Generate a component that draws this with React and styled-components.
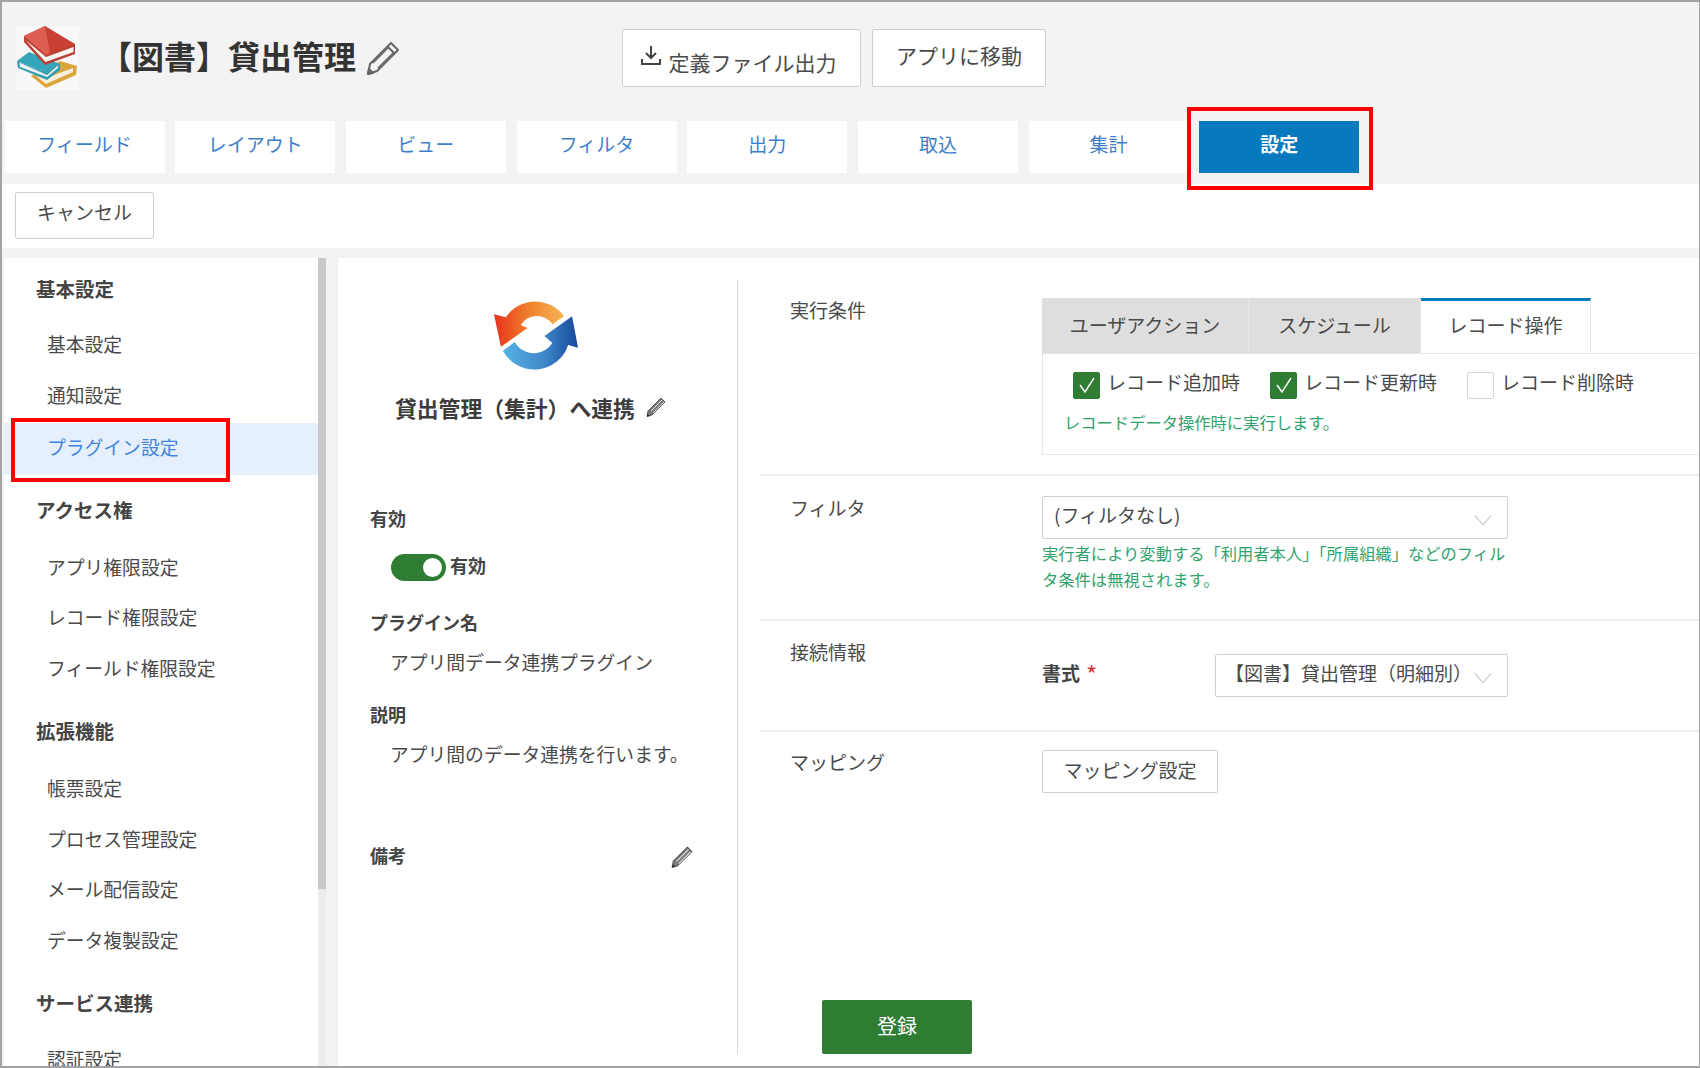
import React from "react";
import styled, { createGlobalStyle } from "styled-components";

const Global = createGlobalStyle`
  html, body { margin: 0; padding: 0; background: #fff; }
  body { font-family: "Noto Sans CJK JP", "Noto Sans", sans-serif; color: #4a4a4a; }
  * { box-sizing: border-box; }
`;

const Frame = styled.div`
  width: 1700px; height: 1068px; display: flex; flex-direction: column; overflow: hidden;
  border-style: solid; border-color: #a3a3a3; border-width: 2px 1px 2px 2px; background: #f3f3f3;
`;
const Header = styled.header`background: #f3f3f3; height: 182px; display: flex; flex-direction: column;`;
const TitleRow = styled.div`height: 119px; padding: 24px 0 0 14px; display: flex; align-items: flex-start;`;
const AppIcon = styled.svg`width: 63px; height: 64px; flex: none; background: #f8f8f8;`;
const AppTitle = styled.h1`
  margin: 7px 0 0 21px; font-size: 32px; line-height: 44px; font-weight: 700; color: #333; white-space: nowrap;
`;
const TitlePencil = styled.svg`width: 36px; height: 36px; margin: 14px 0 0 9px; flex: none;`;
const HeaderButtons = styled.div`display: flex; gap: 11px; margin: 3px 0 0 221px;`;
const HeaderButton = styled.button`
  height: 58px; width: ${p => p.$w}px; background: #fff; border: 1px solid #cfcfcf; border-radius: 2px;
  font: 400 21px "Noto Sans CJK JP", sans-serif; color: #4a4a4a; padding: 0 ${p => p.$pr || 0}px 0 0;
  display: flex; align-items: center; justify-content: center; gap: 6px; white-space: nowrap;
`;
const DownloadIcon = styled.svg`width: 24px; height: 24px; margin-bottom: 6px; flex: none;`;
const ButtonTextLow = styled.span`padding-top: 8px;`;
const ButtonTextHigh = styled.span`padding-bottom: 7px;`;

const TabRow = styled.nav`display: flex; gap: 10.7px; padding-left: 2.5px; height: 52px;`;
const Tab = styled.div`
  position: relative; width: 160px; height: 52px; display: flex; align-items: center; justify-content: center;
  font-size: 19px; padding-bottom: 7px;
  background: ${p => (p.$active ? "#0679bf" : "#fff")};
  color: ${p => (p.$active ? "#fff" : "#3f7fca")};
  font-weight: ${p => (p.$active ? 700 : 400)};
`;
const TabMark = styled.span`
  position: absolute; left: -12px; right: -14px; top: -14px; bottom: -17px; border: 4px solid #f00;
`;

const Toolbar = styled.div`background: #fff; height: 64px; padding: 8px 13px; flex: none;`;
const Button = styled.button`
  height: ${p => p.$h || 47}px; width: ${p => p.$w}px; background: #fff; border: 1px solid #cfcfcf; border-radius: 2px;
  font: 400 19px "Noto Sans CJK JP", sans-serif; color: #4a4a4a; padding: 0 0 ${p => p.$pb || 4}px;
`;

const Body = styled.div`flex: 1; min-height: 0; display: flex; padding: 10px 0 0 2px; background: #f3f3f3;`;
const Sidebar = styled.aside`
  position: relative; width: 322px; flex: none; background: #fff; padding: 11px 8px 0 0; overflow: hidden;
  &::before { content: ""; position: absolute; top: 0; right: 0; bottom: 0; width: 8px; background: #ececec; }
  &::after { content: ""; position: absolute; top: 0; right: 0; height: 631px; width: 8px; background: #c9c9c9; }
`;
const NavHead = styled.div`
  height: 40px; line-height: 40px; padding-left: 32px; font-size: 19.5px; font-weight: 700; color: #444; white-space: nowrap;
  margin: ${p => p.$mt}px 0 ${p => p.$mb}px;
`;
const NavItem = styled.div`
  position: relative; height: ${p => (p.$active ? "52px" : "50.5px")}; line-height: 48px; padding-left: 43px; font-size: 18.8px; white-space: nowrap;
  margin: ${p => (p.$active ? "2px 0 -3.5px" : "0")};
  background: ${p => (p.$active ? "#e6effc" : "transparent")};
  color: ${p => (p.$active ? "#3f86dc" : "#4a4a4a")};
`;
const NavMark = styled.span`
  position: absolute; left: 7px; top: -5px; width: 219px; height: 64px; border: 4px solid #f00;
`;

const Main = styled.main`flex: 1; min-width: 0; margin-left: 12px; background: #fff; display: flex;`;
const InfoColumn = styled.section`
  width: 400px; height: 774px; margin-top: 22px; flex: none; border-right: 1px solid #d8d8d8; padding: 18px 0 0 32px;
`;
const Logo = styled.svg`display: block; width: 86px; height: 74px; margin-left: 123px;`;
const PluginTitle = styled.div`
  display: flex; align-items: center; margin: 16px 0 0 25px; height: 38px; font-size: 21.8px; font-weight: 700; color: #3c3c3c; white-space: nowrap;
`;
const SmallPencil = styled.svg`width: ${p => p.$s || 22}px; height: ${p => p.$s || 22}px; flex: none; margin: ${p => p.$mt || 0}px 0 0 ${p => p.$ml || 0}px;`;
const FieldHead = styled.div`
  display: flex; justify-content: space-between; align-items: center; width: 324px;
  font-size: 18px; font-weight: 700; color: #444; line-height: 28px; margin-top: ${p => p.$mt}px;
`;
const FieldValue = styled.div`font-size: 18.8px; line-height: 30px; padding-left: 20px; margin-top: ${p => p.$mt}px; white-space: nowrap;`;
const SwitchRow = styled.div`display: flex; align-items: center; gap: 4px; padding-left: 21px; margin-top: 22px; font-size: 18px; font-weight: 700; color: #444; height: 27px;`;
const SwitchText = styled.span`margin-bottom: 6px;`;
const Switch = styled.span`
  position: relative; width: 55px; height: 27px; border-radius: 14px; background: #2e7d32; flex: none;
  &::after { content: ""; position: absolute; right: 4px; top: 4px; width: 19px; height: 19px; border-radius: 50%; background: #fff; }
`;

const FormColumn = styled.section`flex: 1; min-width: 0; margin-left: 22px; display: flex; flex-direction: column;`;
const FormRow = styled.div`
  display: flex; height: ${p => p.$h}px; padding: ${p => p.$pt}px 0 0 30px; border-bottom: ${p => (p.$last ? "none" : "2px solid #eeeeee")}; flex: none;
`;
const RowLabel = styled.div`width: 252px; flex: none; font-size: 19px; line-height: 28px; margin-top: ${p => p.$mt}px; color: #4a4a4a;`;
const RowBody = styled.div`flex: 1; min-width: 0;`;
const ModeTabs = styled.div`display: flex; height: 55px;`;
const ModeTab = styled.div`
  height: 55px; width: ${p => p.$w}px; display: flex; align-items: center; justify-content: center; font-size: 19px; padding-bottom: 5px;
  background: ${p => (p.$active ? "#fff" : "#dedede")};
  border-top: 3px solid ${p => (p.$active ? "#0679bf" : "#dedede")};
  border-right: 1px solid #e4e7ec;
`;
const ModePanel = styled.div`height: 102px; border: 1px solid #e4e7ec; border-right: none; padding: 16px 0 0 30px;`;
const CheckRow = styled.div`display: flex; height: 30px;`;
const CheckLabel = styled.label`display: flex; align-items: center; width: ${p => p.$w}px; font-size: 19px;`;
const CheckText = styled.span`margin-bottom: 7px;`;
const Check = styled.span`
  width: 27px; height: 27px; margin: 0 7px 0 0; flex: none; border-radius: 2px; display: flex; align-items: center; justify-content: center;
  background: ${p => (p.$on ? "#2e7d32" : "#fff")};
  border: 1px solid ${p => (p.$on ? "#2e7d32" : "#d5d5d5")};
`;
const CheckMark = styled.svg`width: 20px; height: 20px;`;
const Hint = styled.div`font-size: 16.3px; line-height: 26px; color: #2fa36c; margin: ${p => p.$mt}px 0 0 ${p => p.$ml || 0}px; width: ${p => p.$w || "auto"};`;
const Select = styled.div`
  width: ${p => p.$w}px; height: ${p => p.$h}px; background: #fff; border: 1px solid #cfcfcf; border-radius: 2px; flex: none;
  display: flex; align-items: center; justify-content: space-between; padding: 0 14px 0 ${p => p.$pl}px; font-size: ${p => p.$fs}px; white-space: nowrap;
`;
const SelectText = styled.span`margin-bottom: 6px;`;
const Chevron = styled.svg`width: 20px; height: 12px; flex: none; margin-top: 4px;`;
const FormatRow = styled.div`display: flex; align-items: center;`;
const FormatLabel = styled.div`width: 173px; font-size: 19px; font-weight: 700; color: #444; margin-bottom: 6px; display: flex; align-items: center;`;
const Required = styled.span`color: #d0323c; margin-left: 6px; font-weight: 400; font-size: 24px; line-height: 28px; margin-top: 2px;`;
const Footer = styled.div`margin-top: auto; padding: 0 0 12px 62px;`;
const SubmitButton = styled.button`
  width: 150px; height: 54px; border: none; border-radius: 2px; background: #2e7d32; color: #fff;
  font: 400 20px "Noto Sans CJK JP", sans-serif; padding: 0 0 4px;
`;

const BookIcon = () => (
  <AppIcon viewBox="0 0 63 64">
    <path d="M44 35 L61 40 L60 49 L30 62 L15 50Z" fill="#dba53c" />
    <path d="M19 49 L30 58 L57 46 L57 42 L30 52Z" fill="#f6efdf" />
    <path d="M1 35 L13 26 L44 38 L31 47Z" fill="#35a5ba" />
    <path d="M1 35 L2 42 L31 54 L44 44 L44 38 L31 47Z" fill="#2f9db2" />
    <path d="M3.5 36.5 L4 41 L31 51 L42 42 L42 39.5 L31 49Z" fill="#eef0f0" />
    <path d="M8 10 L8 16 L29 39 L59 28 L59 18Z" fill="#bd4036" />
    <path d="M9.5 14 L29.5 36 L57.5 26 L57.5 21 L30 31Z" fill="#f7f3f0" />
    <path d="M8 10 L29 0 L59 18 L30 29Z" fill="#c83f33" />
    <path d="M8 10 L29 0 L34 27 L30 29Z" fill="#dc5f52" />
  </AppIcon>
);

const HollowPencil = () => (
  <TitlePencil viewBox="0 0 36 36" fill="none" stroke="#666" strokeWidth="2" strokeLinejoin="round">
    <path d="M26 3 L33 10 L12 31 L3 34 L5 24Z" />
    <path d="M22.5 6.5 L29.5 13.5" />
    <path d="M8 23 L24 7 M13 28 L28 13" strokeWidth="1.4" />
    <path d="M3 34 L4 29 L8 33Z" fill="#444" />
  </TitlePencil>
);

const FilledPencil = ({ ml, mt, s }) => (
  <SmallPencil $ml={ml} $mt={mt} $s={s} viewBox="0 0 22 22">
    <path d="M16 2 L20 6 L7 19 L2 20.5 L3 15Z" fill="#7a7a7a" stroke="#555" strokeWidth="1" strokeLinejoin="round" />
    <path d="M6 15 L17 4 M8 17 L19 6" stroke="#e2e2e2" strokeWidth="1" />
    <path d="M2 20.5 L2.6 17.5 L5 20Z" fill="#333" />
  </SmallPencil>
);

const SyncLogo = () => (
  <Logo viewBox="0 0 87 72">
    <defs>
      <linearGradient id="syncOrange" x1="0" x2="1" y1="0.5" y2="0.5">
        <stop offset="0" stopColor="#e8301c" />
        <stop offset="0.5" stopColor="#f0822e" />
        <stop offset="1" stopColor="#f6b654" />
      </linearGradient>
      <linearGradient id="syncBlue" x1="0" x2="1" y1="0.5" y2="0.5">
        <stop offset="0" stopColor="#57b2e2" />
        <stop offset="0.55" stopColor="#3f88c8" />
        <stop offset="1" stopColor="#17479c" />
      </linearGradient>
    </defs>
    <path d="M72 17 A36 36 0 0 0 13 18 L1 15 L8 48 L35 29 L28 26 A19 19 0 0 1 60 25Z" fill="url(#syncOrange)" />
    <path d="M10 52 L22 43 A22 22 0 0 0 60 44 L52 37 L80 17 L86 49 L76 46 A36 36 0 0 1 10 52Z" fill="url(#syncBlue)" />
  </Logo>
);

const Tick = () => (
  <CheckMark viewBox="0 0 20 20" fill="none" stroke="#fff" strokeWidth="1.4">
    <path d="M3 10 L8 17 L17 3" />
  </CheckMark>
);

const Chev = () => (
  <Chevron viewBox="0 0 22 12" fill="none" stroke="#c9c9c9" strokeWidth="1.3">
    <path d="M2 1 L11 11 L20 1" />
  </Chevron>
);

const tabs = ["フィールド", "レイアウト", "ビュー", "フィルタ", "出力", "取込", "集計"];
const nav = [
  { head: "基本設定", mt: 0, mb: 11, items: ["基本設定", "通知設定", "プラグイン設定"] },
  { head: "アクセス権", mt: 18, mb: 13, items: ["アプリ権限設定", "レコード権限設定", "フィールド権限設定"] },
  { head: "拡張機能", mt: 17, mb: 13, items: ["帳票設定", "プロセス管理設定", "メール配信設定", "データ複製設定"] },
  { head: "サービス連携", mt: 17, mb: 12, items: ["認証設定"] },
];

export default function App() {
  return (
    <Frame>
      <Global />
      <Header>
        <TitleRow>
          <BookIcon />
          <AppTitle>【図書】貸出管理</AppTitle>
          <HollowPencil />
          <HeaderButtons>
            <HeaderButton $w={239} $pr={8}>
              <DownloadIcon viewBox="0 0 24 24" fill="none" stroke="#444" strokeWidth="2">
                <path d="M12 3 V15 M7 10 L12 15 L17 10 M3 16 V21 H21 V16" />
              </DownloadIcon>
              <ButtonTextLow>定義ファイル出力</ButtonTextLow>
            </HeaderButton>
            <HeaderButton $w={174}><ButtonTextHigh>アプリに移動</ButtonTextHigh></HeaderButton>
          </HeaderButtons>
        </TitleRow>
        <TabRow>
          {tabs.map(t => <Tab key={t}>{t}</Tab>)}
          <Tab $active>設定<TabMark /></Tab>
        </TabRow>
      </Header>
      <Toolbar><Button $w={139} $pb={8}>キャンセル</Button></Toolbar>
      <Body>
        <Sidebar>
          {nav.map(g => (
            <div key={g.head}>
              <NavHead $mt={g.mt} $mb={g.mb}>{g.head}</NavHead>
              {g.items.map(it => {
                const active = it === "プラグイン設定";
                return <NavItem key={it} $active={active}>{it}{active && <NavMark />}</NavItem>;
              })}
            </div>
          ))}
        </Sidebar>
        <Main>
          <InfoColumn>
            <SyncLogo />
            <PluginTitle>貸出管理（集計）へ連携<FilledPencil ml={10} /></PluginTitle>
            <FieldHead $mt={78}>有効</FieldHead>
            <SwitchRow><Switch /><SwitchText>有効</SwitchText></SwitchRow>
            <FieldHead $mt={27}>プラグイン名</FieldHead>
            <FieldValue $mt={11}>アプリ間データ連携プラグイン</FieldValue>
            <FieldHead $mt={23}>説明</FieldHead>
            <FieldValue $mt={11}>アプリ間のデータ連携を行います。</FieldValue>
            <FieldHead $mt={72}>備考<FilledPencil s={24} mt={4} /></FieldHead>
          </InfoColumn>
          <FormColumn>
            <FormRow $h={218} $pt={40}>
              <RowLabel $mt={-2}>実行条件</RowLabel>
              <RowBody>
                <ModeTabs>
                  <ModeTab $w={207}>ユーザアクション</ModeTab>
                  <ModeTab $w={172}>スケジュール</ModeTab>
                  <ModeTab $w={170} $active>レコード操作</ModeTab>
                </ModeTabs>
                <ModePanel>
                  <CheckRow>
                    <CheckLabel $w={197}><Check $on><Tick /></Check><CheckText>レコード追加時</CheckText></CheckLabel>
                    <CheckLabel $w={197}><Check $on><Tick /></Check><CheckText>レコード更新時</CheckText></CheckLabel>
                    <CheckLabel $w={180}><Check /><CheckText>レコード削除時</CheckText></CheckLabel>
                  </CheckRow>
                  <Hint $mt={9} $ml={-9}>レコードデータ操作時に実行します。</Hint>
                </ModePanel>
              </RowBody>
            </FormRow>
            <FormRow $h={145} $pt={20}>
              <RowLabel $mt={-2}>フィルタ</RowLabel>
              <RowBody>
                <Select $w={466} $h={43} $pl={11} $fs={19}><SelectText>(フィルタなし)</SelectText><Chev /></Select>
                <Hint $mt={1} $w="466px">実行者により変動する「利用者本人」「所属組織」などのフィルタ条件は無視されます。</Hint>
              </RowBody>
            </FormRow>
            <FormRow $h={111} $pt={33}>
              <RowLabel $mt={-16}>接続情報</RowLabel>
              <RowBody>
                <FormatRow>
                  <FormatLabel>書式<Required>*</Required></FormatLabel>
                  <Select $w={293} $h={43} $pl={9} $fs={19}><SelectText>【図書】貸出管理（明細別）</SelectText><Chev /></Select>
                </FormatRow>
              </RowBody>
            </FormRow>
            <FormRow $h={100} $pt={18} $last>
              <RowLabel $mt={-2}>マッピング</RowLabel>
              <RowBody><Button $w={176} $h={43} $pb={5}>マッピング設定</Button></RowBody>
            </FormRow>
            <Footer><SubmitButton>登録</SubmitButton></Footer>
          </FormColumn>
        </Main>
      </Body>
    </Frame>
  );
}
